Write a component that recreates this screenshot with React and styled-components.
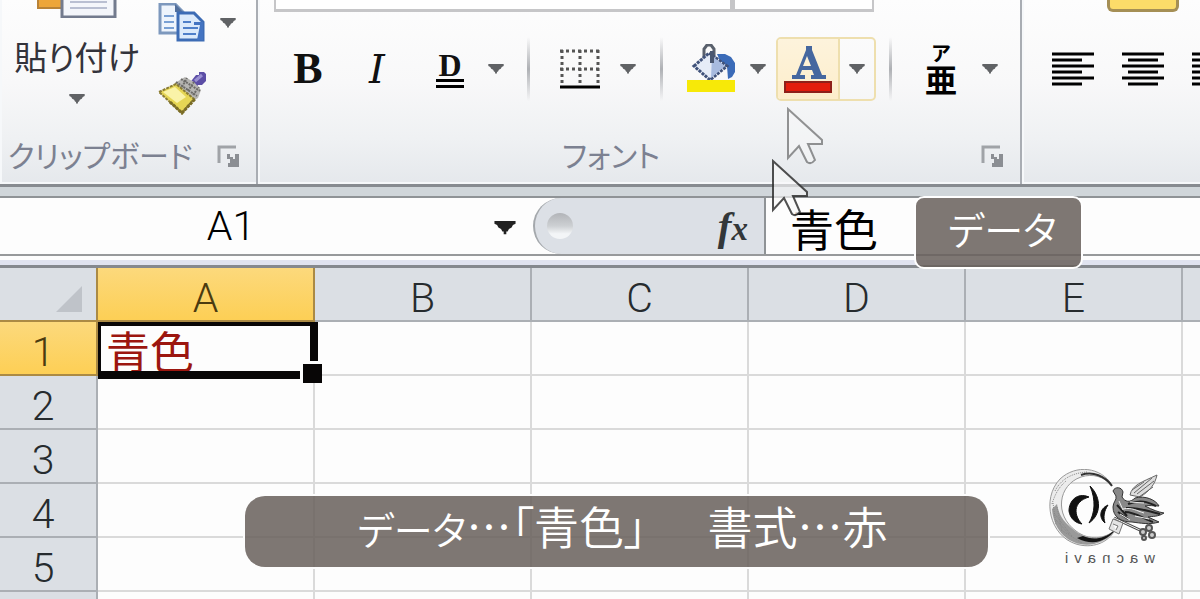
import React from 'react';
import styled, { createGlobalStyle } from 'styled-components'

const GlobalStyle = createGlobalStyle`
    * {
        box-sizing: border-box;
    }

    body {
        margin: 0;
        background: #fdfdfd;
        font-family: "Noto Sans CJK JP", sans-serif;
    }

    button, input {
        font-family: inherit;
        border: 0;
        padding: 0;
        background: none;
    }
`

const Window = styled.div`
    position: relative;
    display: flex;
    flex-direction: column;
    height: 100vh;
    overflow: hidden;
`

const Ribbon = styled.div`
    display: flex;
    flex-shrink: 0;
    height: 187px;
    border-bottom: 3px solid #878b90;
    overflow: hidden;
`

const Group = styled.section`
    display: flex;
    flex-direction: column;
    flex: ${({width}) => width ? `0 0 ${width}` : '1 0 0'};
    min-width: 0;
    overflow: hidden;
    border-right: ${({width}) => width ? '2px solid #a9adb3' : '0'};
    background: linear-gradient(#fdfdfd 0%, #f8f8f9 45%, #eff1f3 75%, #e5e8ec 100%);
    box-shadow: inset 2px -2px 0 #f6f8fa;
`

const GroupBody = styled.div`
    display: flex;
    flex-direction: ${({column}) => column ? 'column' : 'row'};
    height: 132px;
`

const GroupFooter = styled.div`
    display: flex;
    align-items: center;
    height: 48px;
`

const GroupTitle = styled.div`
    flex: 1;
    text-align: center;
    white-space: nowrap;
    font-size: 30px;
    line-height: 44px;
    padding-bottom: 4px;
    font-weight: 400;
    font-feature-settings: "palt";
    color: #7c8191;
`

const Launcher = styled.button`
    display: flex;
    width: 56px;
    justify-content: center;
`

const PasteButton = styled.button`
    display: flex;
    flex-direction: column;
    align-items: center;
    width: 154px;
    height: 108px;
    gap: 20px;
`

const PasteLabel = styled.span`
    font-size: 33px;
    line-height: 36px;
    white-space: nowrap;
    font-weight: 400;
    font-feature-settings: "palt";
    color: #33333b;
`

const ClipboardTools = styled.div`
    display: flex;
    flex-direction: column;
    gap: 28px;
    padding-top: 3px;
`

const ClipboardRow = styled.div`
    display: flex;
    align-items: center;
    gap: 8px;
`

const ComboRow = styled.div`
    display: flex;
    flex-shrink: 0;
    height: 12px;
    margin: 0 146px 0 16px;
`

const Combo = styled.input`
    flex: ${({grow}) => grow};
    min-width: 0;
    height: 12px;
    background: #fff;
    border: solid #c6c6c8;
    border-width: 0 2px 3px;

    & + & {
        border-left-width: 3px;
    }
`

const ToolRow = styled.div`
    display: flex;
    height: 64px;
    margin-top: 25px;
    padding-left: ${({indent}) => indent};
`

const Tool = styled.button`
    display: flex;
    flex: 0 0 ${({width}) => width};
    align-items: center;
    justify-content: center;
`

const SplitButton = styled.div`
    display: flex;
    flex: 0 0 100px;
    margin-left: 4px;
    border: 2px solid #eedfae;
    border-radius: 5px;
    overflow: hidden;

    button:first-child {
        background: linear-gradient(#fdf3dc, #fdeecb);
        border-right: 2px solid #eedfae;
    }
`

const Divider = styled.span`
    display: flex;
    flex: 0 0 ${({width}) => width};
    justify-content: center;

    &::before {
        content: '';
        width: 3px;
        background: linear-gradient(#d0d2d400, #aeb0b4 50%, #d0d2d400);
    }
`

const Letter = styled.span`
    font-family: "Liberation Serif", serif;
    font-size: ${({size}) => size};
    font-weight: bold;
    line-height: 28px;
    color: #111;
    border-bottom: ${({lined}) => lined ? '9px double #000' : '0'};
    padding: 0 ${({lined}) => lined ? '2px' : '0'};
`

const ItalicLetter = styled(Letter)`
    font-family: "DejaVu Serif", serif;
    font-style: italic;
    font-weight: normal;
`

const Ruby = styled.span`
    display: flex;
    flex-direction: column;
    align-items: center;
    font-weight: bold;
    color: #000;

    span:first-child {
        font-size: 20px;
        line-height: 18px;
    }

    span:last-child {
        font-size: 32px;
        line-height: 32px;
    }
`

const WrapToggle = styled.button`
    flex-shrink: 0;
    width: 72px;
    height: 12px;
    margin-left: 85px;
    background: #fcdc69;
    border: solid #a58f55;
    border-width: 0 3px 3px;
    border-radius: 0 0 6px 6px;
`

const FormulaBar = styled.div`
    flex-shrink: 0;
    padding-bottom: 4px;
    border-top: 9px solid #d0d6da;
    border-bottom: 5px solid #e0e3ef;
    background: #fdfdfd;
`

const FormulaInner = styled.div`
    display: flex;
    height: 60px;
    border-top: 2px solid #8f9396;
    border-bottom: 2px solid #97999b;
`

const NameBox = styled.input`
    width: 462px;
    font-family: Roboto, sans-serif;
    font-size: 41px;
    font-weight: 300;
    text-align: center;
    color: #000;
`

const NameArrow = styled.button`
    display: flex;
    align-items: center;
    justify-content: flex-end;
    width: 54px;
    margin-right: 17px;
    padding-top: 4px;
`

const FunctionBar = styled.div`
    display: flex;
    flex: 0 0 233px;
    align-items: center;
    justify-content: space-between;
    padding: 0 16px 0 12px;
    background: #dce0e6;
    border-left: 2px solid #a4a8ac;
    border-right: 2px solid #8f9396;
    border-radius: 28px 0 0 28px;
`

const Knob = styled.span`
    width: 26px;
    height: 26px;
    border-radius: 50%;
    background: linear-gradient(#b2b4b8, #cdd0d3 50%, #f3f5f7 80%);
`

const FxButton = styled.button`
    font-family: "Liberation Serif", serif;
    font-style: italic;
    font-weight: bold;
    font-size: 41px;
    line-height: 48px;
    color: #333739;

    sub {
        font-size: 33px;
        line-height: 0;
        vertical-align: baseline;
    }
`

const FormulaInput = styled.input`
    flex: 1;
    min-width: 0;
    padding: 4px 0 0 24px;
    font-size: 44px;
    font-weight: 400;
    color: #000;
`

const Sheet = styled.table`
    flex-shrink: 0;
    table-layout: fixed;
    width: max(100%, 1400px);
    border-collapse: separate;
    border-spacing: 0;
    border-top: 3px solid #85898e;

    col:first-child {
        width: 98px;
    }

    col {
        width: 217px;
    }

    col:last-child {
        width: auto;
    }
`

const HeaderCell = styled.th`
    height: 54px;
    padding: 8px 0 0;
    border-right: 2px solid ${({active}) => active ? '#ab8a44' : '#abafb4'};
    border-bottom: 2px solid ${({active}) => active ? '#ab8a44' : '#abafb4'};
    background: ${({active}) => active ? 'linear-gradient(#fcd97c, #fdcf55)' : '#dbdfe4'};
    font-family: Roboto, sans-serif;
    font-size: 41px;
    line-height: 44px;
    font-weight: 300;
    color: ${({active}) => active ? '#4b3b10' : '#262b2e'};
`

const RowHeader = styled(HeaderCell)`
    padding-right: 10px;
`

const Corner = styled.td`
    padding: 0 14px 8px 0;
    height: 54px;
    border-right: 2px solid #ab8a44;
    border-bottom: 2px solid #ab8a44;
    background: #dbdfe4;
    text-align: right;
    vertical-align: bottom;
    line-height: 0;
`

const Cell = styled.td`
    position: relative;
    height: 54px;
    padding: 4px 0 0 8px;
    border-right: 2px solid #dadada;
    border-bottom: 2px solid #dadada;
    font-size: 44px;
    line-height: 48px;
    font-weight: 400;
    white-space: nowrap;
    color: #9c160f;
`

const Selection = styled.span`
    position: absolute;
    z-index: 1;
    inset: 0 -5px -5px 0;
    border: solid #080606;
    border-width: 4px 8px 8px 3px;

    &::after {
        content: '';
        position: absolute;
        right: -12px;
        bottom: -12px;
        width: 19px;
        height: 19px;
        background: #080606;
        border: solid #fdfdfd;
        border-width: 3px 0 0 3px;
    }
`

const Tag = styled.div`
    position: absolute;
    top: 196px;
    left: 914px;
    width: 169px;
    padding: 0 0 9px 8px;
    border: 2px solid #fff;
    border-radius: 10px;
    background: #68605bda;
    text-align: center;
    font-size: 39px;
    line-height: 60px;
    font-weight: 350;
    font-feature-settings: "palt";
    color: #fff;
`

const Caption = styled.div`
    position: absolute;
    z-index: 2;
    left: 245px;
    right: 212px;
    bottom: 32px;
    padding: 0 0 9px 12px;
    border-radius: 20px;
    background: #68605bda;
    box-shadow: 0 0 0 2px #fdfdfd;
    text-align: center;
    white-space: nowrap;
    font-size: 45px;
    line-height: 60px;
    font-weight: 350;
    font-feature-settings: "palt";
    color: #fff;
`

const CaptionKana = styled.span`
    font-size: 39px;
`

const CaptionFormat = styled.span`
    padding-left: 16px;
`

const Pointer = styled.svg`
    position: absolute;
    left: ${({left}) => left};
    top: ${({top}) => top};
    opacity: ${({faded}) => faded ? 0.5 : 0.85};
`

const Watermark = styled.div`
    position: absolute;
    right: 34px;
    bottom: 34px;
    width: 118px;
    text-align: center;

    svg {
        display: block;
    }
`

const Mirrored = styled.div`
    transform: scaleX(-1);
    font-family: "Liberation Sans", sans-serif;
    font-size: 15px;
    line-height: 14px;
    letter-spacing: 6px;
    color: #555;
`

const ArrowIcon = ({color = '#606265', size = 16}) => (
    <svg width={size} height={size * 0.6} viewBox="0 0 16 10">
        <path d="M0 0H16V2L14 3L13 5L11 6L10 8H9V10H7V8H6L5 6L3 5L2 3L0 2Z" fill={color} />
    </svg>
)

const LauncherIcon = () => (
    <svg width="22" height="22" viewBox="0 0 22 22">
        <path d="M2 18V2H19" fill="none" stroke="#a0a3a7" strokeWidth="3" />
        <path d="M10 9H13V12H16V14H18V9H22V22H11V18H13V14H10Z" fill="#8b8e93" />
    </svg>
)

const PasteIcon = () => (
    <svg width="80" height="18" viewBox="0 0 80 18">
        <path d="M1 -10H40V8H1Z" fill="#eda63a" stroke="#b98337" strokeWidth="2" />
        <path d="M25 -10H78V17H25Z" fill="#f4f6fb" stroke="#737b8e" strokeWidth="3" />
        <path d="M33 2H70M33 8H70" stroke="#b9bfd2" strokeWidth="2" />
    </svg>
)

const CopyIcon = () => (
    <svg width="48" height="40" viewBox="0 0 48 40">
        <path d="M2 1H17L25 9V30H2Z" fill="#eef4fc" stroke="#7d98bd" strokeWidth="3" />
        <path d="M6 13H16M6 19H16M6 25H16" stroke="#79a0d4" strokeWidth="2" />
        <path d="M17 1V9H25" fill="#526f9c" />
        <path d="M20 10H36L45 19V37H20Z" fill="#dceafb" stroke="#3d6cb5" strokeWidth="3" />
        <path d="M36 10V19H45V37H39L42 22H36Z" fill="#4474c2" />
        <path d="M25 19H33M25 25H40M25 31H38" stroke="#4f7fc9" strokeWidth="2" />
    </svg>
)

const BrushIcon = () => (
    <svg width="48" height="44" viewBox="0 0 48 44">
        <path d="M34 9L38 4H41V1H46L48 3V10L44 14H40L38 18L31 13Z" fill="#5c4ea6" />
        <path d="M37 10L44 4" stroke="#9a90d2" strokeWidth="3" />
        <path d="M17 12L27 6L36 11L43 19L40 27L35 30L18 16Z" fill="#b6b5b2" />
        <path d="M18 11L39 25M23 8L42 20M24 16L29 7M30 20L36 11M35 24L41 16" stroke="#6c6b68" strokeWidth="2" strokeDasharray="2 1" />
        <path d="M1 21L18 13L36 28L24 42Z" fill="#e6d655" stroke="#8a7c35" strokeWidth="2" strokeDasharray="3 1" />
        <path d="M5 21L17 16L28 26L19 32Z" fill="#faf3a8" />
        <path d="M12 31L24 42L37 28" fill="none" stroke="#7a6c26" strokeWidth="3" strokeDasharray="3 1" />
    </svg>
)

const BorderIcon = () => (
    <svg width="40" height="40" viewBox="0 0 40 40">
        <path d="M0 2H40M0 20H40M2 1V36M20 1V36M38 1V36" stroke="#555" strokeWidth="3" strokeDasharray="3 3" />
        <path d="M0 38H40" stroke="#000" strokeWidth="3" />
    </svg>
)

const BucketIcon = () => (
    <svg width="48" height="50" viewBox="0 0 48 50">
        <path d="M30 10H38L44 13L48 19V28L45 33L41 35L40 22L33 17Z" fill="#3b6bb8" />
        <path d="M17 17V5L20 1H24L27 5V19" fill="none" stroke="#59606c" strokeWidth="3" />
        <path d="M7 22L22 9L40 22L23 36Z" fill="#e6ecf7" stroke="#40527a" strokeWidth="3" strokeDasharray="3 1" />
        <path d="M25 12L38 22L24 34Z" fill="#a8bbdf" />
        <path d="M25 7V19" stroke="#4a5770" strokeWidth="4" />
        <path d="M0 36H48V48H0Z" fill="#f7e908" />
    </svg>
)

const FontColorIcon = () => (
    <svg width="48" height="50" viewBox="0 0 48 50">
        <path d="M8 35V31H12L22 6V2H28V6L38 31H42V35H27V31H30L28 26H18L16 31H21V35ZM19 22H27L23 12Z" fill="#45679f" fillRule="evenodd" />
        <path d="M1 38H47V48H1Z" fill="#e21d0c" stroke="#8e2019" strokeWidth="2" />
    </svg>
)

const AlignIcon = ({center}) => (
    <svg width="42" height="34" viewBox="0 0 42 34">
        <path d="M0 2H42M0 14H42M0 26H42" stroke="#000" strokeWidth="3" />
        <path d={center ? 'M6 8H36M6 20H36M6 32H36' : 'M0 8H30M0 20H30M0 32H30'} stroke="#000" strokeWidth="3" />
    </svg>
)

const PointerIcon = props => (
    <Pointer width="38" height="60" viewBox="0 0 38 60" {...props}>
        <path
            d="M2 2V51L13 39L21 55Q25 58 29 53L22 37H36V33Z"
            fill="#faf9f9"
            fillOpacity="0.75"
            stroke="#333"
            strokeWidth="2"
        />
    </Pointer>
)

const BirdLogo = () => (
    <svg width="118" height="82" viewBox="0 0 118 82">
        <path d="M64 16C53 -2 28 -5 12 10C-7 30 2 67 28 75C44 80 60 74 67 61C57 70 41 72 28 62C6 46 10 16 33 8C45 4 56 8 64 16Z" fill="#ececec" stroke="#999" strokeWidth="1" />
        <path d="M4 40C6 66 26 79 46 75C57 72 64 67 67 61C55 71 39 72 26 61C16 53 11 47 9 35Z" fill="#999" />
        <path d="M29 69C46 78 60 71 67 61C55 71 44 71 35 67Z" fill="#151515" />
        <path d="M7 22C13 10 24 4 39 3M4 35C7 25 11 18 18 12M8 51L21 65M6 44L24 67M13 61L34 74M5 34L8 56M9 38L14 62" fill="none" stroke="#888" strokeWidth="1" strokeDasharray="1 1" />
        <path d="M33 6C45 2 57 7 64 17" fill="none" stroke="#333" strokeWidth="2" />
        <path d="M41 28C29 23 21 32 21 42C22 49 27 54 34 55C26 47 24 33 41 28Z" fill="#111" stroke="#111" strokeWidth="1" />
        <path d="M42 17C54 29 53 46 41 54C47 44 48 31 42 17Z" fill="#111" stroke="#111" strokeWidth="1" />
        <path d="M60 36C51 40 51 49 57 54C55 48 56 42 60 36Z" fill="#111" stroke="#111" strokeWidth="1" />
        <path d="M82 26C84 16 94 13 109 6C107 15 102 22 92 28Z" fill="#ddd" stroke="#666" strokeWidth="1" />
        <path d="M86 24L104 9M89 25L106 12M91 28L105 18M84 21L96 13" stroke="#666" strokeWidth="1" />
        <path d="M65 22C67 17 74 18 75 23L74 28C77 33 82 34 87 29C97 26 108 31 111 37C105 37 101 36 97 37C105 41 110 43 116 44C110 48 105 47 100 48L111 53C102 56 92 54 84 53C73 53 65 48 65 38C65 33 69 31 68 27Z" fill="#888" stroke="#333" strokeWidth="1" />
        <path d="M80 35C92 30 100 33 108 37M78 39C90 38 99 42 112 45M77 43C87 43 96 50 105 53M70 43L80 50M69 36L79 47" fill="none" stroke="#222" strokeWidth="2" />
        <path d="M75 40C84 38 89 42 96 44M82 33L96 34M87 47L101 50M71 32L75 41M72 45L82 51" fill="none" stroke="#eee" strokeWidth="1" />
        <path d="M66 49L94 62" stroke="#444" strokeWidth="3" />
        <path d="M66 49L94 62" stroke="#eee" strokeWidth="1" />
        <path d="M65 50L61 60L71 65L75 54ZM65 55L70 57L68 61" fill="#e4e4e4" stroke="#777" strokeWidth="1" />
        <g fill="#ccc" stroke="#555" strokeWidth="2">
            <circle cx="95" cy="63" r="3" />
            <circle cx="101" cy="59" r="3" />
            <circle cx="104" cy="66" r="3" />
            <circle cx="96" cy="69" r="2" />
        </g>
    </svg>
)

const columns = ['A', 'B', 'C', 'D', 'E', '']
const rows = [1, 2, 3, 4, 5, '']

const App = () => (
    <Window>
        <GlobalStyle />

        <Ribbon>
            <Group width="258px">
                <GroupBody>
                    <PasteButton>
                        <PasteIcon />
                        <PasteLabel>貼り付け</PasteLabel>
                        <ArrowIcon />
                    </PasteButton>
                    <ClipboardTools>
                        <ClipboardRow>
                            <Tool width="56px" aria-label="コピー"><CopyIcon /></Tool>
                            <Tool width="20px" aria-label="コピーのオプション"><ArrowIcon /></Tool>
                        </ClipboardRow>
                        <ClipboardRow>
                            <Tool width="56px" aria-label="書式のコピー"><BrushIcon /></Tool>
                        </ClipboardRow>
                    </ClipboardTools>
                </GroupBody>
                <GroupFooter>
                    <GroupTitle>クリップボード</GroupTitle>
                    <Launcher aria-label="クリップボードの詳細"><LauncherIcon /></Launcher>
                </GroupFooter>
            </Group>

            <Group width="764px">
                <GroupBody column>
                    <ComboRow>
                        <Combo grow={459} aria-label="フォント名" />
                        <Combo grow={139} aria-label="フォントサイズ" />
                    </ComboRow>
                    <ToolRow indent="20px">
                        <Tool width="60px"><Letter size="44px">B</Letter></Tool>
                        <Tool width="78px"><ItalicLetter size="40px">I</ItalicLetter></Tool>
                        <Tool width="68px"><Letter size="32px" lined>D</Letter></Tool>
                        <Tool width="24px" aria-label="下線のオプション"><ArrowIcon /></Tool>
                        <Divider width="40px" />
                        <Tool width="64px" aria-label="罫線"><BorderIcon /></Tool>
                        <Tool width="32px" aria-label="罫線のオプション"><ArrowIcon /></Tool>
                        <Divider width="34px" />
                        <Tool width="66px" aria-label="塗りつぶしの色"><BucketIcon /></Tool>
                        <Tool width="28px" aria-label="塗りつぶしのオプション"><ArrowIcon /></Tool>
                        <SplitButton>
                            <Tool width="62px" aria-label="フォントの色"><FontColorIcon /></Tool>
                            <Tool width="34px" aria-label="フォントの色のオプション"><ArrowIcon /></Tool>
                        </SplitButton>
                        <Divider width="28px" />
                        <Tool width="74px">
                            <Ruby><span>ア</span><span>亜</span></Ruby>
                        </Tool>
                        <Tool width="24px" aria-label="ふりがなのオプション"><ArrowIcon /></Tool>
                    </ToolRow>
                </GroupBody>
                <GroupFooter>
                    <GroupTitle>フォント</GroupTitle>
                    <Launcher aria-label="フォントの詳細"><LauncherIcon /></Launcher>
                </GroupFooter>
            </Group>

            <Group>
                <GroupBody column>
                    <WrapToggle aria-label="下揃え" />
                    <ToolRow indent="16px">
                        <Tool width="70px" aria-label="左揃え"><AlignIcon /></Tool>
                        <Tool width="70px" aria-label="中央揃え"><AlignIcon center /></Tool>
                        <Tool width="70px" aria-label="右揃え"><AlignIcon /></Tool>
                    </ToolRow>
                </GroupBody>
            </Group>
        </Ribbon>

        <FormulaBar>
            <FormulaInner>
                <NameBox aria-label="名前ボックス" defaultValue="A1" />
                <NameArrow aria-label="名前の一覧"><ArrowIcon color="#222" size={22} /></NameArrow>
                <FunctionBar>
                    <Knob />
                    <FxButton>f<sub>x</sub></FxButton>
                </FunctionBar>
                <FormulaInput aria-label="数式バー" defaultValue="青色" />
            </FormulaInner>
        </FormulaBar>

        <Sheet>
            <colgroup>
                <col />
                {columns.map(name => <col key={name} />)}
            </colgroup>
            <thead>
                <tr>
                    <Corner>
                        <svg width="26" height="26" viewBox="0 0 26 26">
                            <path d="M26 0V26H0Z" fill="#bfc3c9" />
                        </svg>
                    </Corner>
                    {columns.map(name => (
                        <HeaderCell key={name} scope="col" active={name === 'A' ? 1 : undefined}>{name}</HeaderCell>
                    ))}
                </tr>
            </thead>
            <tbody>
                {rows.map(row => (
                    <tr key={row}>
                        <RowHeader scope="row" active={row === 1 ? 1 : undefined}>{row}</RowHeader>
                        {columns.map(name => (
                            <Cell key={name}>
                                {row === 1 && name === 'A' && <><Selection />青色</>}
                            </Cell>
                        ))}
                    </tr>
                ))}
            </tbody>
        </Sheet>

        <PointerIcon left="786px" top="107px" faded="true" />
        <PointerIcon left="771px" top="159px" />
        <Tag>データ</Tag>
        <Caption>
            <CaptionKana>データ</CaptionKana>…「青色」　<CaptionFormat>書式…赤</CaptionFormat>
        </Caption>
        <Watermark>
            <BirdLogo />
            <Mirrored>wacnavi</Mirrored>
        </Watermark>
    </Window>
)

export default App
